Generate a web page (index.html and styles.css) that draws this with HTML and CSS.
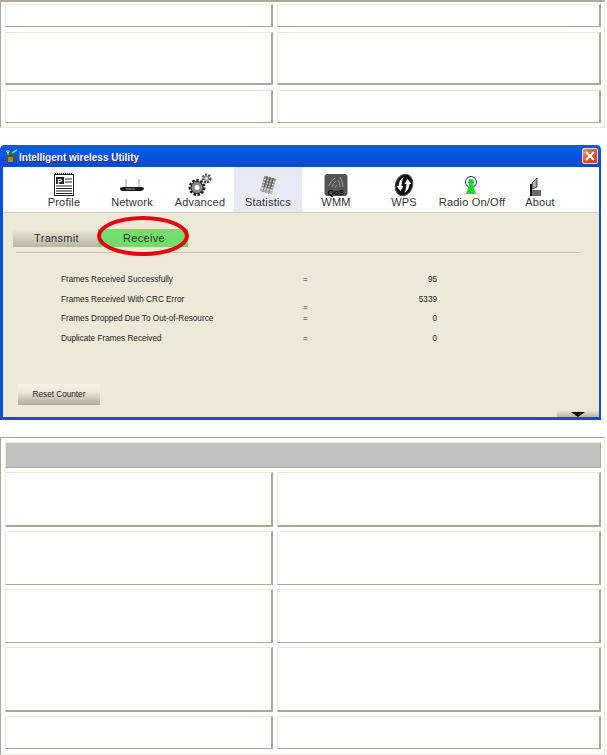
FILE: index.html
```html
<!DOCTYPE html>
<html lang="en">
<head>
    <meta charset="UTF-8">
    <meta name="viewport" content="width=device-width, initial-scale=1.0">
    <title>Intelligent wireless Utility</title>
    <link rel="stylesheet" href="styles.css">
</head>
<body>

<!-- empty table above the screenshot -->
<div class="panel panel-top">
    <div class="cell h23"></div>
    <div class="cell h23"></div>
    <div class="cell h53 thick"></div>
    <div class="cell h53 thick"></div>
    <div class="cell h33"></div>
    <div class="cell h33"></div>
</div>

<div class="window">
    <div class="titlebar">
        <svg class="app-logo" width="13" height="14" viewBox="0 0 13 14">
            <rect x="1" y="5" width="9" height="8" fill="#3c5a2a"/>
            <rect x="3" y="8" width="5" height="5" fill="#a08a30"/>
            <path d="M3 6V1M1 2l2 2 2-2" stroke="#e8f0d8" stroke-width="1" fill="none"/>
            <path d="M7 4l5-3" stroke="#70e070" stroke-width="1.5"/>
        </svg>
        <span class="title">Intelligent wireless Utility</span>
        <div class="close">
            <svg width="10" height="10" viewBox="0 0 10 10">
                <path d="M1 1l8 8M9 1l-8 8" stroke="#fff" stroke-width="2"/>
            </svg>
        </div>
    </div>

    <div class="toolbar">
        <div class="tool">
            <svg width="24" height="24" viewBox="0 0 24 24">
                <rect x="2.5" y="1.5" width="19" height="21" fill="#fff" stroke="#222"/>
                <path d="M3 1h18" stroke="#222" stroke-width="2" stroke-dasharray="1 1"/>
                <rect x="4" y="4" width="8" height="7" fill="#222"/>
                <text x="5.5" y="10.5" class="icon-p">P</text>
                <path d="M13 6h7M13 9h7M4 13h16M4 15.5h16M4 18h16M4 20.5h16" stroke="#222" stroke-width="1.2"/>
            </svg>
            <span>Profile</span>
        </div>
        <div class="tool">
            <svg width="28" height="24" viewBox="0 0 28 24">
                <path d="M8 6v8M21 6v8" stroke="#999" stroke-width="1"/>
                <path d="M2 15.5q0-1.5 3-1.5h18q3 0 3 1.5t-3 2.500H5q-3 0-3-2.500z" fill="#1a1a1a"/>
                <path d="M8 16h9" stroke="#999" stroke-width="1"/>
            </svg>
            <span>Network</span>
        </div>
        <div class="tool">
            <svg width="26" height="24" viewBox="0 0 26 24">
                <circle cx="10" cy="14.500" r="7" fill="none" stroke="#222" stroke-width="3" stroke-dasharray="2.500 1.500"/>
                <circle cx="10" cy="14.500" r="6" fill="#8a8a8a" stroke="#222"/>
                <circle cx="10" cy="14.500" r="2.500" fill="#f4f4f4"/>
                <circle cx="19.500" cy="5.500" r="3.800" fill="none" stroke="#555" stroke-width="2.500" stroke-dasharray="2 1.200"/>
                <circle cx="19.500" cy="5.500" r="2.500" fill="#bbb" stroke="#555" stroke-width=".6"/>
                <circle cx="19.500" cy="5.500" r="1" fill="#fff"/>
            </svg>
            <span>Advanced</span>
        </div>
        <div class="tool active">
            <svg width="24" height="24" viewBox="0 0 24 24">
                <g transform="rotate(16 12 12)">
                    <rect x="6" y="4" width="12" height="16" fill="#8e8e8a"/>
                    <path d="M6 7.500h12M6 10.500h12M6 13.500h12M6 16.500h12" stroke="#d8d8d4" stroke-width="1"/>
                    <path d="M9 4v16M12 4v16M15 4v16" stroke="#555" stroke-width="1.200"/>
                    <rect x="6" y="15" width="12" height="5" fill="#fff" opacity=".35"/>
                </g>
            </svg>
            <span>Statistics</span>
        </div>
        <div class="tool">
            <svg width="24" height="24" viewBox="0 0 24 24">
                <rect x="0.5" y="1" width="23" height="22" rx="3" fill="#555"/>
                <path d="M5 13q1-5 6-8M8 14q1-4 4-6M11 15q.5-2 2-3M16 4q3 5 3 10M14 7q2 3 2 7" stroke="#9a9a9a" stroke-width="1" fill="none"/>
                <text x="12" y="21.500" class="icon-qos">QoS</text>
            </svg>
            <span>WMM</span>
        </div>
        <div class="tool">
            <svg width="24" height="24" viewBox="0 0 24 24">
                <ellipse cx="12" cy="12" rx="8.500" ry="11" transform="rotate(18 12 12)" fill="#111" stroke="#555"/>
                <path d="M11.500 4Q7 7 6.500 13l-2 0 4 5 3-5-2 0q0-4 2-9z" fill="#fff"/>
                <path d="M12.500 20q4.500-3 5-9l2 0-4-5-3 5 2 0q0 4-2 9z" fill="#fff"/>
            </svg>
            <span>WPS</span>
        </div>
        <div class="tool">
            <svg width="24" height="24" viewBox="0 0 24 24">
                <circle cx="11" cy="9" r="5.500" fill="#fff" stroke="#1a2a8a" stroke-width="1"/>
                <circle cx="11" cy="9" r="3" fill="#10d820"/>
                <path d="M9.500 11h3l3.500 10H6z" fill="#10e020"/>
            </svg>
            <span>Radio On/Off</span>
        </div>
        <div class="tool">
            <svg width="24" height="24" viewBox="0 0 24 24">
                <path d="M3 23V11" stroke="#111" stroke-width="2"/>
                <path d="M4 10l5-5v9l-5 2z" fill="#aaa" stroke="#222" stroke-width=".8"/>
                <rect x="4" y="17" width="9" height="6" fill="#6a6a6a"/>
            </svg>
            <span>About</span>
        </div>
    </div>

    <div class="content">
        <div class="tabs">
            <div class="tab">Transmit</div>
            <div class="tab tab-on">Receive</div>
            <div class="ring"></div>
        </div>
        <div class="tab-rule"></div>

        <div class="stats">
            <span>Frames Received Successfully</span><span class="eq">=</span><span class="num">95</span>
            <span>Frames Received With CRC Error</span><span class="eq eq-low">=</span><span class="num">5339</span>
            <span>Frames Dropped Due To Out-of-Resource</span><span class="eq">=</span><span class="num">0</span>
            <span>Duplicate Frames Received</span><span class="eq">=</span><span class="num">0</span>
        </div>

        <div class="content-foot">
            <div class="reset">Reset Counter</div>
            <div class="more"><div class="more-arrow"></div></div>
        </div>
    </div>
</div>

<!-- empty table below the screenshot -->
<div class="panel panel-bottom">
    <div class="cell head"></div>
    <div class="cell h55 thick"></div>
    <div class="cell h55 thick"></div>
    <div class="cell h54"></div>
    <div class="cell h54"></div>
    <div class="cell h54"></div>
    <div class="cell h54"></div>
    <div class="cell h65 thick"></div>
    <div class="cell h65 thick"></div>
    <div class="cell h33"></div>
    <div class="cell h33"></div>
</div>

</body>
</html>
```

FILE: styles.css
```css
html, body {
    margin: 0;
    padding: 0;
    background-color: #fff;
    overflow: hidden;
}

body {
    width: 607px;
    height: 755px;
    font-family: "Liberation Sans", Arial, sans-serif;
}

/* tables */
.panel {
    box-sizing: border-box;
    width: 605px;
    display: grid;
    grid-template-columns: 268px 324px;
    border-style: solid;
    border-color: #aca899 #ece9d8 #ece9d8 #aca899;
    border-width: 2px 1px 1px 1px;
}

.panel-top {
    row-gap: 5px;
    column-gap: 4px;
    padding: 2px 4px 4px 4px;
}

.panel-bottom {
    row-gap: 4px;
    column-gap: 4px;
    padding: 4px 4px 5px 4px;
    margin-top: 17px;
    border-top-width: 1px;
}

.cell {
    box-sizing: border-box;
    border-style: solid;
    border-color: #ece9d8 #aca899 #aca899 #ece9d8;
    border-width: 1px 2px 1px 1px;
    background-color: #fff;
}

.thick { border-bottom-width: 2px; }

.h23 { height: 23px; }
.h33 { height: 33px; }
.h53 { height: 53px; }
.h54 { height: 54px; }
.h55 { height: 55px; }
.h65 { height: 65px; }

.head {
    grid-column: 1 / 3;
    height: 26px;
    background-color: #c0c0c0;
    border-right-width: 1px;
}

/* app window */
.window {
    box-sizing: border-box;
    width: 601px;
    height: 275px;
    margin-top: 17px;
    display: flex;
    flex-direction: column;
    background-color: #0a4fd6;
    border-radius: 5px 5px 0 0;
    padding: 0 2px 3px 3px;
}

.titlebar {
    height: 22px;
    flex: none;
    display: flex;
    align-items: center;
    margin: 0 -2px 0 -3px;
    padding: 0 3px 0 5px;
    border-radius: 5px 5px 0 0;
    background: linear-gradient(#0a5ae0, #0a58e6 20%, #0450dc 75%, #0a48c4);
}

.app-logo { margin-right: 1px; }

.title {
    flex: 1;
    padding-top: 2px;
    font-size: 10px;
    font-weight: bold;
    color: #fff;
    text-shadow: 1px 1px 0 #0a2f90;
}

.close {
    width: 16px;
    height: 16px;
    box-sizing: border-box;
    display: flex;
    justify-content: center;
    align-items: center;
    border: 1px solid #f0d8d0;
    border-radius: 2px;
    background: linear-gradient(135deg, #f09878, #e0552f 50%, #c83a18);
}

.toolbar {
    height: 46px;
    flex: none;
    box-sizing: border-box;
    display: flex;
    padding-left: 27px;
    background-color: #fff;
    border-bottom: 1px solid #cfcdc2;
}

.tool {
    width: 68px;
    display: flex;
    flex-direction: column;
    align-items: center;
    padding-top: 6px;
    box-sizing: border-box;
    font-size: 11px;
    color: #333;
}

.tool svg { flex: none; margin-bottom: -1px; }

.tool span { line-height: 12px; letter-spacing: 0.2px; white-space: nowrap; }

.active { background-color: #e9e9f5; }

.icon-p { font: bold 7px "Liberation Sans", sans-serif; fill: #fff; }
.icon-qos { font: bold 8px "Liberation Sans", sans-serif; fill: #000; text-anchor: middle; }

.content {
    flex: 1;
    display: flex;
    flex-direction: column;
    background-color: #ece9d8;
    color: #222;
}

.tabs {
    display: flex;
    position: relative;
    margin: 16px 0 0 10px;
}

.tab {
    width: 85px;
    height: 18px;
    display: flex;
    justify-content: center;
    align-items: center;
    padding-left: 2px;
    box-sizing: border-box;
    font-size: 11px;
    letter-spacing: 0.3px;
    color: #333;
    background: linear-gradient(#ece9d8, #b8b5a6);
}

.tab-on {
    width: 90px;
    background: linear-gradient(#6fe06f, #78d868);
}

.ring {
    position: absolute;
    left: 84px;
    top: -13px;
    width: 92px;
    height: 40px;
    box-sizing: border-box;
    border: 4px solid #e8000f;
    border-radius: 50%;
}

.tab-rule {
    height: 1px;
    margin: 5px 18px 0 13px;
    background-color: #c8c5b6;
}

.stats {
    display: grid;
    grid-template-columns: 242px 100px 34px;
    grid-auto-rows: 19.700px;
    margin: 17px 0 0 58px;
    font-size: 8.200px;
    line-height: 19.700px;
    color: #1a1a1a;
}

.eq-low { margin-top: 8px; }
.num { text-align: right; }

.content-foot {
    flex: 1;
    display: flex;
    justify-content: space-between;
    align-items: flex-end;
    padding-left: 15px;
}

.reset {
    width: 82px;
    height: 21px;
    margin-bottom: 12px;
    display: flex;
    justify-content: center;
    align-items: center;
    font-size: 8.200px;
    background: linear-gradient(#f4f2e8, #ece9d8 35%, #aeab9c);
}

.more {
    width: 42px;
    height: 7px;
    display: flex;
    justify-content: center;
    align-items: flex-end;
    background: linear-gradient(#ece9d8, #b8b5a6);
}

.more-arrow {
    width: 0;
    height: 0;
    border-style: solid;
    border-width: 5px 7px 0 7px;
    border-color: #000 transparent transparent transparent;
}
```
